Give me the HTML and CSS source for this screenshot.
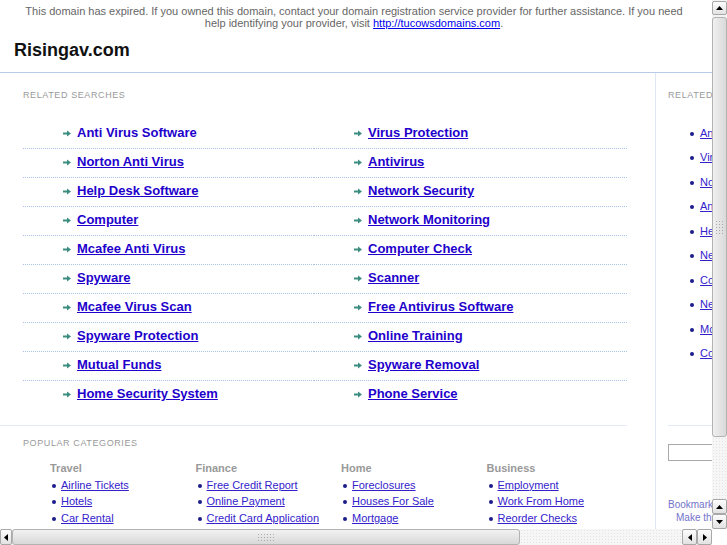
FILE: index.html
```html
<!DOCTYPE html>
<html>
<head>
<meta charset="utf-8">
<title>Risingav.com</title>
<link rel="stylesheet" href="styles.css">
</head>
<body>
<div class="screen">
  <div class="viewport">
    <div class="page">
      <div class="notice">This domain has expired. If you owned this domain, contact your domain registration service provider for further assistance. If you need help identifying your provider, visit <a href="#">http://tucowsdomains.com</a>.</div>
      <header class="masthead"><h1>Risingav.com</h1></header>
      <div class="main">
        <div class="primary">
          <section class="related">
            <h2 class="label">Related Searches</h2>
            <ul class="searches">
              <li><span class="arrow"><svg width="8" height="7" viewBox="0 0 8 7"><path d="M0 3.5H4.5" stroke="#3d8c80" stroke-width="2"/><path d="M4 0.5L8 3.5L4 6.5Z" fill="#3d8c80"/></svg></span><a class="plain" href="#">Anti Virus Software</a></li>
              <li><span class="arrow"><svg width="8" height="7" viewBox="0 0 8 7"><path d="M0 3.5H4.5" stroke="#3d8c80" stroke-width="2"/><path d="M4 0.5L8 3.5L4 6.5Z" fill="#3d8c80"/></svg></span><a href="#">Virus Protection</a></li>
              <li><span class="arrow"><svg width="8" height="7" viewBox="0 0 8 7"><path d="M0 3.5H4.5" stroke="#3d8c80" stroke-width="2"/><path d="M4 0.5L8 3.5L4 6.5Z" fill="#3d8c80"/></svg></span><a href="#">Norton Anti Virus</a></li>
              <li><span class="arrow"><svg width="8" height="7" viewBox="0 0 8 7"><path d="M0 3.5H4.5" stroke="#3d8c80" stroke-width="2"/><path d="M4 0.5L8 3.5L4 6.5Z" fill="#3d8c80"/></svg></span><a href="#">Antivirus</a></li>
              <li><span class="arrow"><svg width="8" height="7" viewBox="0 0 8 7"><path d="M0 3.5H4.5" stroke="#3d8c80" stroke-width="2"/><path d="M4 0.5L8 3.5L4 6.5Z" fill="#3d8c80"/></svg></span><a href="#">Help Desk Software</a></li>
              <li><span class="arrow"><svg width="8" height="7" viewBox="0 0 8 7"><path d="M0 3.5H4.5" stroke="#3d8c80" stroke-width="2"/><path d="M4 0.5L8 3.5L4 6.5Z" fill="#3d8c80"/></svg></span><a href="#">Network Security</a></li>
              <li><span class="arrow"><svg width="8" height="7" viewBox="0 0 8 7"><path d="M0 3.5H4.5" stroke="#3d8c80" stroke-width="2"/><path d="M4 0.5L8 3.5L4 6.5Z" fill="#3d8c80"/></svg></span><a href="#">Computer</a></li>
              <li><span class="arrow"><svg width="8" height="7" viewBox="0 0 8 7"><path d="M0 3.5H4.5" stroke="#3d8c80" stroke-width="2"/><path d="M4 0.5L8 3.5L4 6.5Z" fill="#3d8c80"/></svg></span><a href="#">Network Monitoring</a></li>
              <li><span class="arrow"><svg width="8" height="7" viewBox="0 0 8 7"><path d="M0 3.5H4.5" stroke="#3d8c80" stroke-width="2"/><path d="M4 0.5L8 3.5L4 6.5Z" fill="#3d8c80"/></svg></span><a href="#">Mcafee Anti Virus</a></li>
              <li><span class="arrow"><svg width="8" height="7" viewBox="0 0 8 7"><path d="M0 3.5H4.5" stroke="#3d8c80" stroke-width="2"/><path d="M4 0.5L8 3.5L4 6.5Z" fill="#3d8c80"/></svg></span><a href="#">Computer Check</a></li>
              <li><span class="arrow"><svg width="8" height="7" viewBox="0 0 8 7"><path d="M0 3.5H4.5" stroke="#3d8c80" stroke-width="2"/><path d="M4 0.5L8 3.5L4 6.5Z" fill="#3d8c80"/></svg></span><a href="#">Spyware</a></li>
              <li><span class="arrow"><svg width="8" height="7" viewBox="0 0 8 7"><path d="M0 3.5H4.5" stroke="#3d8c80" stroke-width="2"/><path d="M4 0.5L8 3.5L4 6.5Z" fill="#3d8c80"/></svg></span><a href="#">Scanner</a></li>
              <li><span class="arrow"><svg width="8" height="7" viewBox="0 0 8 7"><path d="M0 3.5H4.5" stroke="#3d8c80" stroke-width="2"/><path d="M4 0.5L8 3.5L4 6.5Z" fill="#3d8c80"/></svg></span><a href="#">Mcafee Virus Scan</a></li>
              <li><span class="arrow"><svg width="8" height="7" viewBox="0 0 8 7"><path d="M0 3.5H4.5" stroke="#3d8c80" stroke-width="2"/><path d="M4 0.5L8 3.5L4 6.5Z" fill="#3d8c80"/></svg></span><a href="#">Free Antivirus Software</a></li>
              <li><span class="arrow"><svg width="8" height="7" viewBox="0 0 8 7"><path d="M0 3.5H4.5" stroke="#3d8c80" stroke-width="2"/><path d="M4 0.5L8 3.5L4 6.5Z" fill="#3d8c80"/></svg></span><a href="#">Spyware Protection</a></li>
              <li><span class="arrow"><svg width="8" height="7" viewBox="0 0 8 7"><path d="M0 3.5H4.5" stroke="#3d8c80" stroke-width="2"/><path d="M4 0.5L8 3.5L4 6.5Z" fill="#3d8c80"/></svg></span><a href="#">Online Training</a></li>
              <li><span class="arrow"><svg width="8" height="7" viewBox="0 0 8 7"><path d="M0 3.5H4.5" stroke="#3d8c80" stroke-width="2"/><path d="M4 0.5L8 3.5L4 6.5Z" fill="#3d8c80"/></svg></span><a href="#">Mutual Funds</a></li>
              <li><span class="arrow"><svg width="8" height="7" viewBox="0 0 8 7"><path d="M0 3.5H4.5" stroke="#3d8c80" stroke-width="2"/><path d="M4 0.5L8 3.5L4 6.5Z" fill="#3d8c80"/></svg></span><a href="#">Spyware Removal</a></li>
              <li><span class="arrow"><svg width="8" height="7" viewBox="0 0 8 7"><path d="M0 3.5H4.5" stroke="#3d8c80" stroke-width="2"/><path d="M4 0.5L8 3.5L4 6.5Z" fill="#3d8c80"/></svg></span><a href="#">Home Security System</a></li>
              <li><span class="arrow"><svg width="8" height="7" viewBox="0 0 8 7"><path d="M0 3.5H4.5" stroke="#3d8c80" stroke-width="2"/><path d="M4 0.5L8 3.5L4 6.5Z" fill="#3d8c80"/></svg></span><a href="#">Phone Service</a></li>
            </ul>
          </section>
          <section class="popular">
            <h2 class="label">Popular Categories</h2>
            <div class="cats">
              <div class="cat">
                <h3>Travel</h3>
                <ul>
                  <li><span class="dot"></span><a href="#">Airline Tickets</a></li>
                  <li><span class="dot"></span><a href="#">Hotels</a></li>
                  <li><span class="dot"></span><a href="#">Car Rental</a></li>
                </ul>
              </div>
              <div class="cat">
                <h3>Finance</h3>
                <ul>
                  <li><span class="dot"></span><a href="#">Free Credit Report</a></li>
                  <li><span class="dot"></span><a href="#">Online Payment</a></li>
                  <li><span class="dot"></span><a href="#">Credit Card Application</a></li>
                </ul>
              </div>
              <div class="cat">
                <h3>Home</h3>
                <ul>
                  <li><span class="dot"></span><a href="#">Foreclosures</a></li>
                  <li><span class="dot"></span><a href="#">Houses For Sale</a></li>
                  <li><span class="dot"></span><a href="#">Mortgage</a></li>
                </ul>
              </div>
              <div class="cat">
                <h3>Business</h3>
                <ul>
                  <li><span class="dot"></span><a href="#">Employment</a></li>
                  <li><span class="dot"></span><a href="#">Work From Home</a></li>
                  <li><span class="dot"></span><a href="#">Reorder Checks</a></li>
                </ul>
              </div>
            </div>
          </section>
        </div>
        <aside class="side">
          <section class="side-related">
            <h2 class="label">Related Searches</h2>
            <ul class="side-list">
              <li><span class="dot"></span><a href="#">Anti Virus Software</a></li>
              <li><span class="dot"></span><a href="#">Virus Protection</a></li>
              <li><span class="dot"></span><a href="#">Norton Anti Virus</a></li>
              <li><span class="dot"></span><a href="#">Antivirus</a></li>
              <li><span class="dot"></span><a href="#">Help Desk Software</a></li>
              <li><span class="dot"></span><a href="#">Network Security</a></li>
              <li><span class="dot"></span><a href="#">Computer</a></li>
              <li><span class="dot"></span><a href="#">Network Monitoring</a></li>
              <li><span class="dot"></span><a href="#">Mcafee Anti Virus</a></li>
              <li><span class="dot"></span><a href="#">Computer Check</a></li>
            </ul>
          </section>
          <form class="search"><input class="search-box" type="text"></form>
          <div class="bookmark">
            <a href="#" class="bm1">Bookmark this page</a>
            <a href="#" class="bm2">Make this your homepage</a>
          </div>
        </aside>
      </div>
    </div>
  </div>
  <div class="vscroll">
    <div class="sbtn vbtn top"><svg width="7" height="4" viewBox="0 0 7 4"><path d="M0 4L3.5 0L7 4Z" fill="#000"/></svg></div>
    <div class="vthumb"><span class="grip"></span></div>
    <div class="vtrack"></div>
    <div class="sbtn vbtn"><svg width="7" height="4" viewBox="0 0 7 4"><path d="M0 4L3.5 0L7 4Z" fill="#000"/></svg></div>
    <div class="sbtn vbtn"><svg width="7" height="4" viewBox="0 0 7 4"><path d="M0 0L3.5 4L7 0Z" fill="#000"/></svg></div>
  </div>
  <div class="hscroll">
    <div class="sbtn hbtn first"><svg width="4" height="7" viewBox="0 0 4 7"><path d="M4 0L0 3.5L4 7Z" fill="#000"/></svg></div>
    <div class="hthumb"><span class="grip"></span></div>
    <div class="htrack"></div>
    <div class="sbtn hbtn"><svg width="4" height="7" viewBox="0 0 4 7"><path d="M4 0L0 3.5L4 7Z" fill="#000"/></svg></div>
    <div class="sbtn hbtn"><svg width="4" height="7" viewBox="0 0 4 7"><path d="M0 0L4 3.5L0 7Z" fill="#000"/></svg></div>
  </div>
  <div class="corner"></div>
</div>
</body>
</html>
```
FILE: styles.css
```css
* { box-sizing: border-box; }
html, body { margin: 0; padding: 0; background: #fff; }
body { font-family: "Liberation Sans", Arial, sans-serif; }
ul { list-style: none; margin: 0; padding: 0; }
h1, h2, h3 { margin: 0; }

.screen {
  display: grid;
  grid-template-columns: 712px 15px;
  grid-template-rows: 529px 16px;
  width: 727px;
  height: 545px;
  overflow: hidden;
}
.viewport { overflow: hidden; }
.page { width: 900px; }

.notice {
  width: 708px;
  height: 33px;
  padding: 5px 19px 0;
  text-align: center;
  font-size: 11px;
  line-height: 12px;
  color: #666;
}
.notice a { color: #0000ee; text-decoration: underline; }

.masthead {
  height: 40px;
  border-bottom: 1px solid #b9c9e8;
  padding: 6px 0 0 14px;
}
.masthead h1 {
  font-size: 18px;
  line-height: 22px;
  font-weight: bold;
  color: #111;
}

.main { display: flex; }
.primary {
  width: 656px;
  flex: none;
  border-right: 1px solid #dde6f4;
  height: 470px;
}

.label {
  font-size: 9px;
  line-height: 14px;
  font-weight: normal;
  text-transform: uppercase;
  letter-spacing: 0.6px;
  color: #999;
}

.related {
  width: 627px;
  padding: 15px 0 16px 23px;
  border-bottom: 1px solid #e2eaf6;
}
.related .label { margin-bottom: 18px; }

.searches {
  display: grid;
  grid-template-columns: 291px 313px;
}
.searches li {
  height: 29px;
  line-height: 24px;
  padding-left: 40px;
  border-bottom: 1px dotted #a9c1e8;
  white-space: nowrap;
}
.searches li:nth-last-child(-n+2) { border-bottom: none; height: 28px; }
.arrow { display: inline-block; width: 8px; margin-right: 6px; }
.arrow svg { display: block; }
.searches a {
  font-size: 13px;
  font-weight: bold;
  color: #2200cc;
  text-decoration: underline;
}
.searches a.plain { text-decoration: none; }

.popular { padding: 10px 0 0 23px; }
.cats { display: flex; padding-left: 27px; margin-top: 11px; }
.cat { width: 145.5px; flex: none; }
.cat h3 {
  font-size: 11px;
  line-height: 14px;
  font-weight: bold;
  color: #999;
  margin-bottom: 2px;
}
.cat li {
  display: flex;
  align-items: center;
  height: 16.5px;
  font-size: 11px;
  white-space: nowrap;
}
.dot {
  display: inline-block;
  flex: none;
  width: 4px;
  height: 4px;
  border-radius: 50%;
  background: #1c1c8c;
  margin: 1px 5px 0 2px;
}
.cat a, .side-list a { color: #3322cc; text-decoration: underline; font-size: 11px; line-height: 13px; }

.side { width: 240px; flex: none; padding-left: 12px; }
.side-related {
  height: 353px;
  padding-top: 15px;
  border-bottom: 1px solid #e2eaf6;
}
.side-related .label { margin-bottom: 19px; }
.side-list li {
  display: flex;
  align-items: center;
  height: 24.5px;
  padding-left: 20px;
  white-space: nowrap;
}
.side-list .dot { margin-right: 6px; }

.search { margin: 18px 0 0; }
.search-box {
  display: block;
  width: 150px;
  height: 17px;
  border: 1px solid #aaa;
  padding: 0;
  margin: 0;
}
.bookmark { margin-top: 37px; }
.bookmark a {
  display: block;
  font-size: 10px;
  line-height: 13px;
  color: #7373cc;
  text-decoration: none;
  white-space: nowrap;
}
.bookmark .bm2 { padding-left: 8px; }

/* scrollbars */
.vscroll {
  display: flex;
  flex-direction: column;
  padding-top: 1px;
  background: #f3f3f3;
}
.hscroll {
  display: flex;
  background: #f3f3f3;
}
.corner { background: #fff; }
.sbtn {
  display: flex;
  align-items: center;
  justify-content: center;
  background: linear-gradient(#fdfdfd, #e2e2e2);
  border: 1px solid #a8a8a8;
  border-radius: 2px;
  flex: none;
}
.sbtn svg { display: block; }
.vbtn { height: 15px; width: 15px; }
.vbtn.top { height: 14px; }
.hbtn { width: 15px; height: 16px; }
.hbtn.first { width: 12px; }
.vthumb {
  height: 420px;
  margin-top: 2px;
  flex: none;
  background: linear-gradient(to right, #f0f0f0, #d9d9d9);
  border: 1px solid #b2b2b2;
  border-radius: 3px;
  display: flex;
  align-items: center;
  justify-content: center;
}
.vtrack, .htrack {
  flex: 1;
  background-color: #f6f6f6;
  background-image: radial-gradient(#e4e4e4 0.6px, transparent 0.8px);
  background-size: 3px 3px;
}
.hthumb {
  width: 508px;
  flex: none;
  background: linear-gradient(#f2f2f2, #d8d8d8);
  border: 1px solid #b2b2b2;
  border-radius: 3px;
  display: flex;
  align-items: center;
  justify-content: center;
}
.grip {
  display: block;
  background-image: radial-gradient(#aaa 0.7px, transparent 0.9px);
  background-size: 3px 3px;
}
.hthumb .grip { width: 18px; height: 9px; }
.vthumb .grip { width: 9px; height: 15px; }
```
